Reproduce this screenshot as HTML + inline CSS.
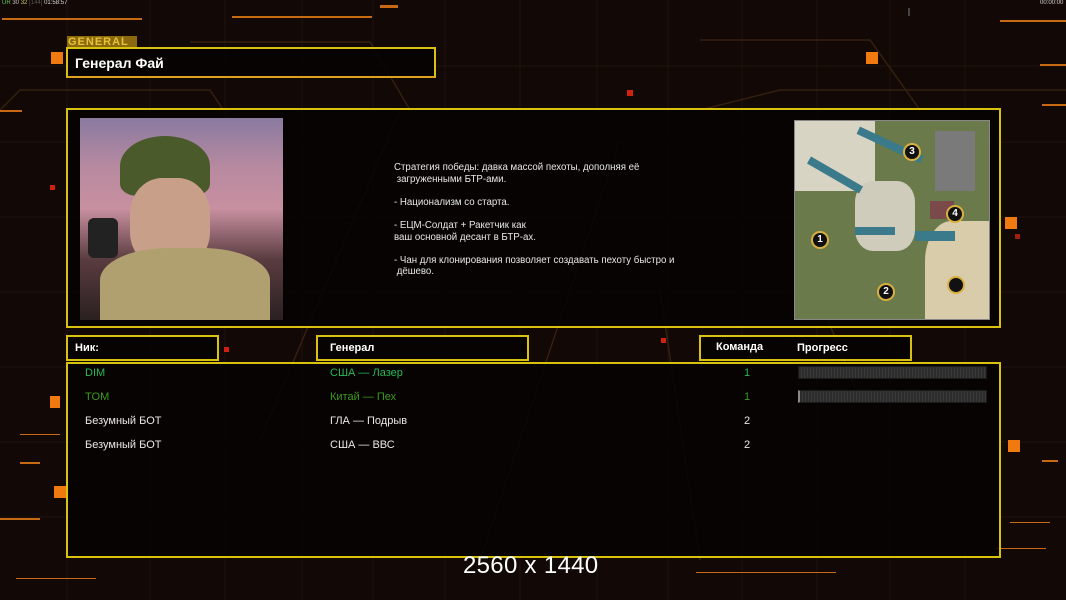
<!DOCTYPE html>
<html><head><meta charset="utf-8"><style>
*{margin:0;padding:0;box-sizing:border-box}
body{width:1066px;height:600px;overflow:hidden;background:#120805;font-family:"Liberation Sans",sans-serif;position:relative;color:#ddd}
.a{position:absolute}
.box{position:absolute;border:2px solid #d8c20e;background:rgba(5,2,2,0.85)}
.o{position:absolute;background:#f07a10}
.ln{position:absolute;background:#c86a14;height:2px}
.t{position:absolute;font-size:11px;white-space:nowrap}
.hd{position:absolute;font-size:11px;font-weight:bold;color:#fff;white-space:nowrap}
.bar{position:absolute;height:13px;background:repeating-linear-gradient(90deg,#2c2c2c 0 2px,#3a3a3a 2px 3px);border:1px solid #1a1a1a}
.num{position:absolute;width:18px;height:18px;border-radius:50%;background:#111;border:2px solid #d8b040;color:#fff;font-size:10px;font-weight:bold;text-align:center;line-height:14px}
</style></head><body>
<svg class="a" style="left:0;top:0" width="1066" height="600">
<g stroke="#1f120c" stroke-width="1" fill="none">
<line x1="67" y1="0" x2="67" y2="600"/><line x1="150" y1="0" x2="150" y2="600"/><line x1="225" y1="0" x2="225" y2="600"/><line x1="302" y1="0" x2="302" y2="600"/><line x1="373" y1="0" x2="373" y2="600"/><line x1="445" y1="0" x2="445" y2="600"/><line x1="520" y1="0" x2="520" y2="600"/><line x1="597" y1="0" x2="597" y2="600"/><line x1="668" y1="0" x2="668" y2="600"/><line x1="742" y1="0" x2="742" y2="600"/><line x1="817" y1="0" x2="817" y2="600"/><line x1="890" y1="0" x2="890" y2="600"/><line x1="965" y1="0" x2="965" y2="600"/>
<line x1="0" y1="66" x2="1066" y2="66"/><line x1="0" y1="142" x2="1066" y2="142"/><line x1="0" y1="217" x2="1066" y2="217"/><line x1="0" y1="292" x2="1066" y2="292"/><line x1="0" y1="367" x2="1066" y2="367"/><line x1="0" y1="442" x2="1066" y2="442"/><line x1="0" y1="517" x2="1066" y2="517"/>
</g>
<g stroke="#34200f" stroke-width="1.5" fill="none">
<polyline points="0,110 20,90 210,90 250,150"/><polyline points="190,42 370,42 410,110"/><polyline points="700,40 870,40 920,110"/>
<line x1="260" y1="440" x2="400" y2="110"/><line x1="620" y1="140" x2="480" y2="560"/><line x1="660" y1="290" x2="700" y2="560"/><line x1="820" y1="300" x2="860" y2="400"/><polyline points="700,110 780,90 1066,90"/>
</g></svg>
<div class="t" style="left:2px;top:0;font-size:6px;color:#9c9"><span style="color:#6c6">UR</span> <span style="color:#ccc">30</span> <span style="color:#cc6">32</span> <span style="color:#555">[144]</span> <span style="color:#ddd">01:58:57</span></div>
<div class="t" style="left:1040px;top:0;font-size:6px;color:#ddd">00:00:00</div>
<div class="ln" style="left:2px;top:18px;width:140px"></div>
<div class="ln" style="left:232px;top:16px;width:140px"></div>
<div class="ln" style="left:380px;top:5px;width:18px;height:3px"></div>
<div class="ln" style="left:1000px;top:20px;width:66px"></div>
<div class="ln" style="left:1040px;top:64px;width:26px"></div>
<div class="ln" style="left:1042px;top:104px;width:24px"></div>
<div class="ln" style="left:0;top:110px;width:22px"></div>
<div class="ln" style="left:20px;top:462px;width:20px"></div>
<div class="ln" style="left:0;top:518px;width:40px"></div>
<div class="ln" style="left:20px;top:434px;width:40px;height:1px"></div>
<div class="ln" style="left:1042px;top:460px;width:16px"></div>
<div class="ln" style="left:1010px;top:522px;width:40px;height:1px"></div>
<div class="ln" style="left:996px;top:548px;width:50px;height:1px"></div>
<div class="ln" style="left:696px;top:572px;width:140px;height:1px"></div>
<div class="ln" style="left:16px;top:578px;width:80px;height:1px"></div>
<div class="o" style="left:51px;top:52px;width:12px;height:12px"></div>
<div class="o" style="left:866px;top:52px;width:12px;height:12px"></div>
<div class="o" style="left:1005px;top:217px;width:12px;height:12px"></div>
<div class="o" style="left:1008px;top:440px;width:12px;height:12px"></div>
<div class="o" style="left:54px;top:486px;width:12px;height:12px"></div>
<div class="o" style="left:50px;top:396px;width:10px;height:12px"></div>
<div class="o" style="left:627px;top:90px;width:6px;height:6px;background:#d02010"></div>
<div class="o" style="left:50px;top:185px;width:5px;height:5px;background:#d02010"></div>
<div class="o" style="left:224px;top:347px;width:5px;height:5px;background:#d02010"></div>
<div class="o" style="left:661px;top:338px;width:5px;height:5px;background:#d02010"></div>
<div class="o" style="left:908px;top:8px;width:2px;height:8px;background:#444"></div>
<div class="o" style="left:1015px;top:234px;width:5px;height:5px;background:#a02010"></div>

<div class="a" style="left:67px;top:36px;width:70px;height:12px;background:#8a6a0c;color:#e8c23a;font-size:11px;font-weight:bold;letter-spacing:1px;line-height:12px;padding-left:1px">GENERAL</div>
<div class="box" style="left:66px;top:47px;width:370px;height:31px;border-bottom-color:#e0a020"></div>
<div class="hd" style="left:75px;top:55px;font-size:14px">Генерал Фай</div>

<div class="box" style="left:66px;top:108px;width:935px;height:220px"></div>
<div class="a" style="left:80px;top:118px;width:203px;height:202px;background:linear-gradient(180deg,#8a7aa0 0%,#b88aa0 25%,#c890a0 45%,#5a3c40 70%,#2a2020 100%);overflow:hidden">
 <div class="a" style="left:40px;top:18px;width:90px;height:60px;border-radius:50% 50% 20% 20%;background:#4a5a2a"></div>
 <div class="a" style="left:50px;top:60px;width:80px;height:90px;border-radius:40%;background:#c8a08a"></div>
 <div class="a" style="left:20px;top:130px;width:170px;height:80px;border-radius:40% 40% 0 0;background:#b0a070"></div>
 <div class="a" style="left:8px;top:100px;width:30px;height:40px;background:#222;border-radius:6px"></div>
</div>
<div class="a" style="left:394px;top:162px;font-size:9.7px;line-height:11.6px;color:#e8e8e8;white-space:pre">Стратегия победы: давка массой пехоты, дополняя её
 загруженными БТР-ами.

- Национализм со старта.

- ЕЦМ-Солдат + Ракетчик как
ваш основной десант в БТР-ах.

- Чан для клонирования позволяет создавать пехоту быстро и
 дёшево.</div>
<div class="a" style="left:794px;top:120px;width:196px;height:200px;border:1px solid #888;background:#6a7a4a;overflow:hidden">
 <div class="a" style="left:0;top:0;width:80px;height:70px;background:#d8d4c4"></div>
 <div class="a" style="left:60px;top:60px;width:60px;height:70px;background:#d0ccbc;border-radius:30%"></div>
 <div class="a" style="left:130px;top:100px;width:66px;height:100px;background:#d8ccaa;border-radius:40% 0 0 0"></div>
 <div class="a" style="left:10px;top:50px;width:60px;height:8px;background:#3a7a8a;transform:rotate(30deg)"></div>
 <div class="a" style="left:60px;top:20px;width:70px;height:8px;background:#3a7a8a;transform:rotate(25deg)"></div>
 <div class="a" style="left:120px;top:110px;width:40px;height:10px;background:#3a7a8a"></div>
 <div class="a" style="left:60px;top:106px;width:40px;height:8px;background:#3a7a8a"></div>
 <div class="a" style="left:140px;top:10px;width:40px;height:60px;background:#7a7a7a"></div>
 <div class="a" style="left:135px;top:80px;width:24px;height:18px;background:#7a4a4a"></div>
 <div class="num" style="left:108px;top:22px">3</div>
 <div class="num" style="left:151px;top:84px">4</div>
 <div class="num" style="left:16px;top:110px">1</div>
 <div class="num" style="left:82px;top:162px">2</div>
 <div class="num" style="left:152px;top:155px"></div>
</div>

<div class="box" style="left:66px;top:335px;width:153px;height:26px"></div>
<div class="box" style="left:316px;top:335px;width:213px;height:26px"></div>
<div class="box" style="left:699px;top:335px;width:213px;height:26px"></div>
<div class="hd" style="left:75px;top:342px">Ник:</div>
<div class="hd" style="left:330px;top:342px">Генерал</div>
<div class="hd" style="left:716px;top:341px">Команда</div>
<div class="hd" style="left:797px;top:342px">Прогресс</div>

<div class="box" style="left:66px;top:362px;width:935px;height:196px"></div>
<div class="t" style="left:85px;top:367px;color:#28b858">DIM</div>
<div class="t" style="left:330px;top:367px;color:#28b858">США — Лазер</div>
<div class="t" style="left:744px;top:367px;color:#28b858">1</div>
<div class="bar" style="left:798px;top:366px;width:189px"></div>
<div class="t" style="left:85px;top:391px;color:#3c9a1c">TOM</div>
<div class="t" style="left:330px;top:391px;color:#3c9a1c">Китай — Пех</div>
<div class="t" style="left:744px;top:391px;color:#3c9a1c">1</div>
<div class="bar" style="left:798px;top:390px;width:189px;border-left:2px solid #888"></div>
<div class="t" style="left:85px;top:415px;color:#e8e8e8">Безумный БОТ</div>
<div class="t" style="left:330px;top:415px;color:#e8e8e8">ГЛА — Подрыв</div>
<div class="t" style="left:744px;top:415px;color:#e8e8e8">2</div>
<div class="t" style="left:85px;top:439px;color:#e8e8e8">Безумный БОТ</div>
<div class="t" style="left:330px;top:439px;color:#e8e8e8">США — ВВС</div>
<div class="t" style="left:744px;top:439px;color:#e8e8e8">2</div>

<div class="t" style="left:463px;top:552px;font-size:24px;color:#fff;letter-spacing:0.3px">2560 x 1440</div>
</body></html>
